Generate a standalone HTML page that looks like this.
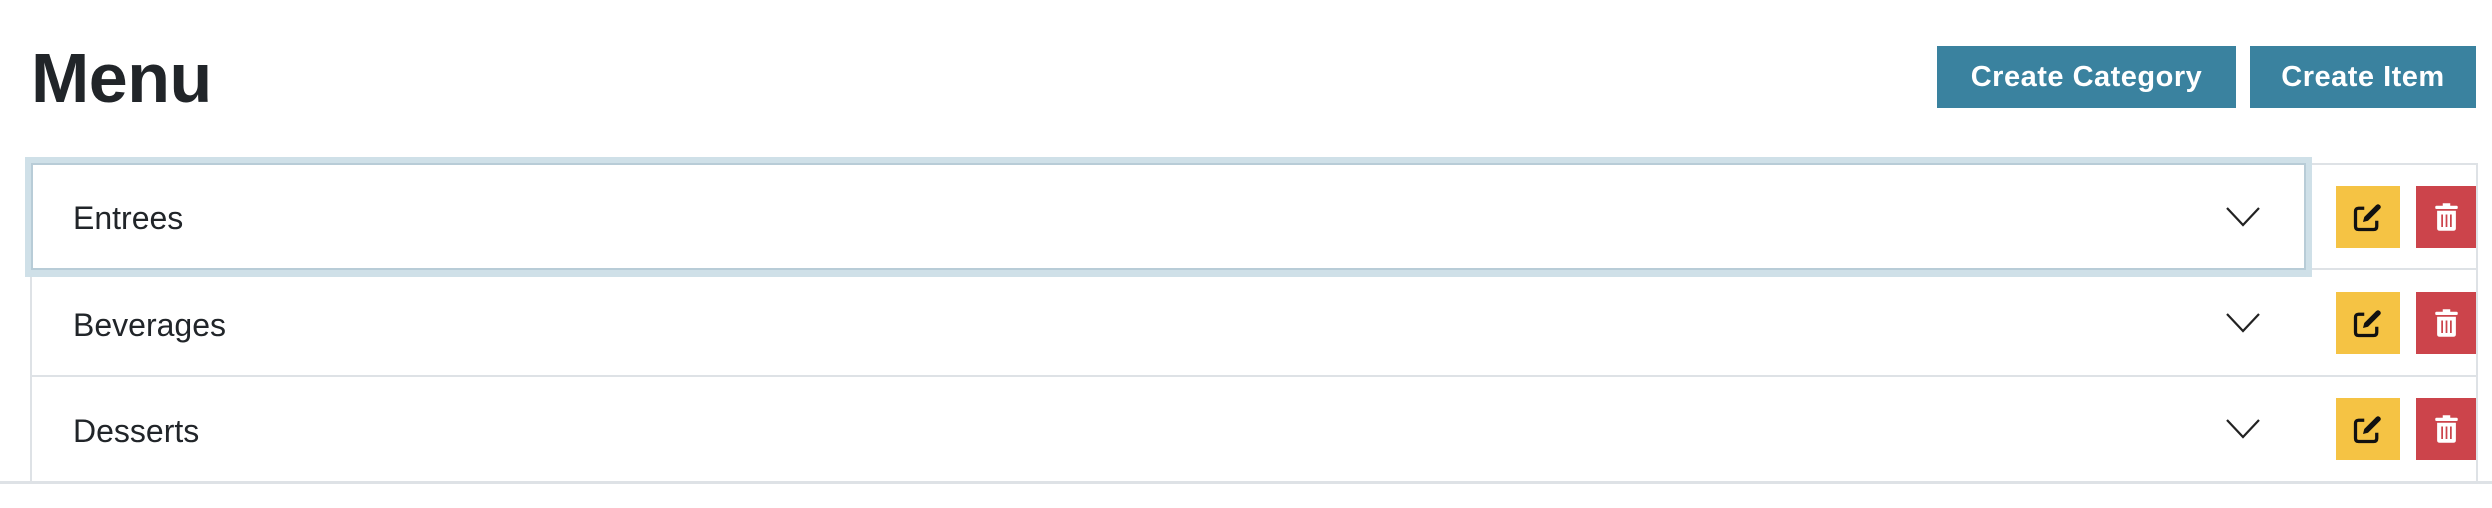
<!DOCTYPE html>
<html><head><meta charset="utf-8"><style>
*{margin:0;padding:0;box-sizing:border-box}
body{width:2492px;height:508px;background:#fff;position:relative;overflow:hidden;font-family:"Liberation Sans",sans-serif;color:#212529}
.abs{position:absolute}
h1{position:absolute;left:31px;top:34px;font-size:70px;font-weight:bold;line-height:88px;letter-spacing:-0.5px}
.btn{position:absolute;top:46px;height:62px;background:#3a829f;color:#fff;font-weight:bold;font-size:29px;line-height:62px;text-align:center;letter-spacing:0.5px}
.hl{position:absolute;height:2px;background:#dee2e6}
.vl{position:absolute;width:2px;background:#dee2e6}
.lbl{position:absolute;left:73px;font-size:32px;line-height:40px}
.y{position:absolute;left:2336px;width:64px;height:62px;background:#f5c344}
.r{position:absolute;left:2416px;width:60px;height:62px;background:#cc444b}
.chev{position:absolute;left:2226px;width:34px;height:20px}
</style></head><body>
<h1>Menu</h1>
<div class="btn" style="left:1937px;width:299px">Create Category</div>
<div class="btn" style="left:2250px;width:226px">Create Item</div>

<div class="hl" style="left:30px;top:163px;width:2448px"></div>
<div class="hl" style="left:30px;top:268px;width:2448px"></div>
<div class="hl" style="left:30px;top:375px;width:2448px"></div>
<div class="hl" style="left:0;top:481px;width:2492px;height:3px"></div>
<div class="vl" style="left:30px;top:163px;height:320px"></div>
<div class="vl" style="left:2476px;top:163px;height:320px"></div>

<div class="abs" style="left:25px;top:157px;width:2287px;height:120px;border:7px solid #cfe0e8"></div>
<div class="abs" style="left:31px;top:163px;width:2275px;height:107px;border:2px solid #b8ccd7"></div>

<div class="lbl" style="top:198px">Entrees</div>
<div class="lbl" style="top:305px">Beverages</div>
<div class="lbl" style="top:411px">Desserts</div>

<svg class="chev" style="top:207px" viewBox="0 0 34 20"><path d="M1 1 L17 18 L33 1" fill="none" stroke="#222" stroke-width="2.2"/></svg>
<svg class="chev" style="top:313px" viewBox="0 0 34 20"><path d="M1 1 L17 18 L33 1" fill="none" stroke="#222" stroke-width="2.2"/></svg>
<svg class="chev" style="top:419px" viewBox="0 0 34 20"><path d="M1 1 L17 18 L33 1" fill="none" stroke="#222" stroke-width="2.2"/></svg>

<div class="y" style="top:186px"></div><div class="r" style="top:186px"></div>
<div class="y" style="top:292px"></div><div class="r" style="top:292px"></div>
<div class="y" style="top:398px"></div><div class="r" style="top:398px"></div>

<svg width="0" height="0" style="position:absolute"><defs>
<g id="ed"><path d="M9 5 H4.5 Q2 5 2 7.5 V19.5 Q2 22 4.5 22 H16.5 Q19 22 19 19.5 V15" fill="none" stroke="#111" stroke-width="2.6"/><path d="M8 16 L9 12 L18.5 2.5 Q20 1 21.5 2.5 Q23 4 21.5 5.5 L12 15 Z" fill="#111"/></g>
<g id="tr"><rect x="1" y="3" width="18" height="2.6" rx="1" fill="#fff"/><rect x="7" y="1" width="6" height="3" fill="#fff"/><path d="M2.5 7 H17.5 V21 Q17.5 23 15.5 23 H4.5 Q2.5 23 2.5 21 Z" fill="#fff"/><path d="M6.5 10 V20 M10 10 V20 M13.5 10 V20" stroke="#cc444b" stroke-width="1.4"/></g>
</defs></svg>
<svg class="abs" style="left:2353px;top:202px" width="30" height="30" viewBox="0 0 24 24"><use href="#ed"/></svg>
<svg class="abs" style="left:2434px;top:202px" width="25" height="30" viewBox="0 0 20 24"><use href="#tr"/></svg>
<svg class="abs" style="left:2353px;top:308px" width="30" height="30" viewBox="0 0 24 24"><use href="#ed"/></svg>
<svg class="abs" style="left:2434px;top:308px" width="25" height="30" viewBox="0 0 20 24"><use href="#tr"/></svg>
<svg class="abs" style="left:2353px;top:414px" width="30" height="30" viewBox="0 0 24 24"><use href="#ed"/></svg>
<svg class="abs" style="left:2434px;top:414px" width="25" height="30" viewBox="0 0 20 24"><use href="#tr"/></svg>
</body></html>
